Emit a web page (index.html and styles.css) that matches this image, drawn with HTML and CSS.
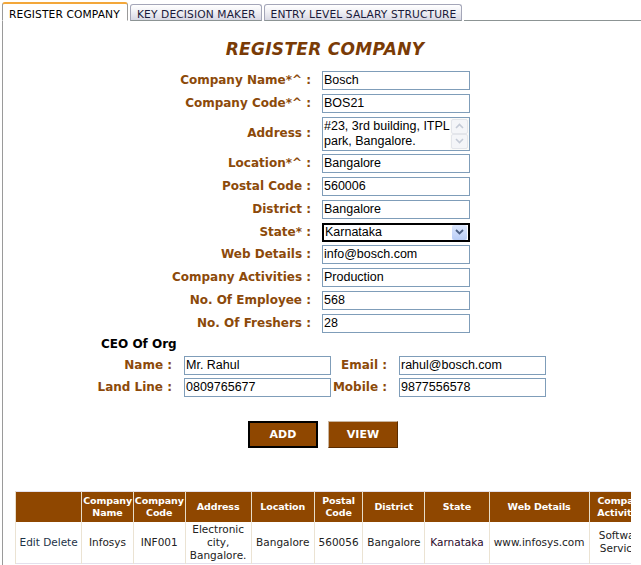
FILE: index.html
```html
<!DOCTYPE html>
<html>
<head>
<meta charset="utf-8">
<link rel="stylesheet" href="styles.css">
</head>
<body>
<div class="tabs">
  <div class="tab active">REGISTER COMPANY</div>
  <div class="tab">KEY DECISION MAKER</div>
  <div class="tab">ENTRY LEVEL SALARY STRUCTURE</div>
  <div class="tabline"></div>
</div>
<div class="panel">
  <h1 class="title">REGISTER COMPANY</h1>
  <div class="form">
    <label>Company Name*^ :</label><div class="inp">Bosch</div>
    <label>Company Code*^ :</label><div class="inp">BOS21</div>
    <label class="addr-label">Address :</label>
    <div class="inp area">
      <div class="area-text">#23, 3rd building, ITPL park, Bangalore.</div>
      <div class="vscroll">
        <div class="sbtn"><svg width="9" height="6" viewBox="0 0 9 6"><path d="M1 5 L4.5 1.5 L8 5" fill="none" stroke="#c4cad6" stroke-width="1.6"/></svg></div>
        <div class="sbtn"><svg width="9" height="6" viewBox="0 0 9 6"><path d="M1 1 L4.5 4.5 L8 1" fill="none" stroke="#c4cad6" stroke-width="1.6"/></svg></div>
      </div>
    </div>
    <label>Location*^ :</label><div class="inp">Bangalore</div>
    <label>Postal Code :</label><div class="inp">560006</div>
    <label>District :</label><div class="inp">Bangalore</div>
    <label>State* :</label>
    <div class="inp select"><span>Karnataka</span><div class="dd"><svg width="9" height="6" viewBox="0 0 9 6"><path d="M1 1 L4.5 4.5 L8 1" fill="none" stroke="#4d6185" stroke-width="1.8"/></svg></div></div>
    <label>Web Details :</label><div class="inp">info@bosch.com</div>
    <label>Company Activities :</label><div class="inp">Production</div>
    <label>No. Of Employee :</label><div class="inp">568</div>
    <label>No. Of Freshers :</label><div class="inp">28</div>
  </div>
  <div class="ceo-title">CEO Of Org</div>
  <div class="ceo">
    <label>Name :</label><div class="inp">Mr. Rahul</div>
    <label>Email :</label><div class="inp">rahul@bosch.com</div>
    <label>Land Line :</label><div class="inp">0809765677</div>
    <label>Mobile :</label><div class="inp">9877556578</div>
  </div>
  <div class="buttons">
    <div class="btn focus">ADD</div>
    <div class="btn">VIEW</div>
  </div>
  <div class="tablewrap">
    <table class="grid">
      <thead>
        <tr>
          <th class="c0"></th>
          <th class="c1">Company Name</th>
          <th class="c2">Company Code</th>
          <th class="c3">Address</th>
          <th class="c4">Location</th>
          <th class="c5">Postal Code</th>
          <th class="c6">District</th>
          <th class="c7">State</th>
          <th class="c8">Web Details</th>
          <th class="c9">Company Activities</th>
        </tr>
      </thead>
      <tbody>
        <tr>
          <td class="act">Edit Delete</td>
          <td>Infosys</td>
          <td>INF001</td>
          <td>Electronic city, Bangalore.</td>
          <td>Bangalore</td>
          <td>560056</td>
          <td>Bangalore</td>
          <td class="state">Karnataka</td>
          <td>www.infosys.com</td>
          <td>Software Services</td>
        </tr>
      </tbody>
    </table>
  </div>
</div>
</body>
</html>
```
FILE: styles.css
```css
html, body {
  margin: 0;
  padding: 0;
  background: #ffffff;
  overflow: hidden;
}
body {
  width: 641px;
  height: 565px;
  font-family: "DejaVu Sans", Verdana, sans-serif;
}
.tabs {
  display: flex;
  align-items: flex-end;
  height: 21px;
  padding-left: 2px;
}
.tab {
  height: 17px;
  box-sizing: border-box;
  margin-right: 2px;
  padding: 3px 5px 0 6px;
  font-size: 10.7px;
  letter-spacing: 0.1px;
  color: #1a1a3a;
  border: 1px solid #a4a6b8;
  border-bottom: 1px solid #8c9494;
  border-radius: 3px 3px 0 0;
  background: linear-gradient(#ffffff, #f2f2f6 40%, #d8d8e4);
  white-space: nowrap;
}
.tab.active {
  height: 19px;
  padding-top: 4px;
  color: #000;
  background: #fff;
  border-color: #9a9a9a;
  border-top: 2px solid #f3a73a;
  border-bottom: 1px solid #fff;
  width: 126px;
}
.tabline {
  flex: 1;
  border-bottom: 1px solid #8c9494;
  height: 0;
}
.panel {
  margin-left: 2px;
  border-left: 1px solid #9a9a9a;
  height: 544px;
  width: 640px;
  overflow: hidden;
}
.title {
  margin: 0;
  padding: 18px 0 0 4px;
  height: 32px;
  box-sizing: content-box;
  text-align: center;
  font-size: 17px;
  font-style: italic;
  font-weight: bold;
  color: #7a3b06;
  letter-spacing: 0.3px;
  line-height: 20px;
}
.form {
  display: grid;
  grid-template-columns: 140px 148px;
  column-gap: 11px;
  row-gap: 3.75px;
  margin-left: 168px;
}
label {
  text-align: right;
  font-size: 12px;
  font-weight: bold;
  color: #8c4a0a;
  line-height: 19px;
  white-space: nowrap;
}
.inp {
  height: 19px;
  box-sizing: border-box;
  border: 1px solid #7f9db9;
  font-family: "Liberation Sans", Arial, sans-serif;
  font-size: 12.5px;
  line-height: 17px;
  padding-left: 1px;
  color: #000;
  background: #fff;
  white-space: nowrap;
  overflow: hidden;
}
.addr-label {
  align-self: center;
}
.area {
  height: 34px;
  display: flex;
  padding: 0;
  white-space: normal;
  line-height: 15px;
}
.area-text {
  flex: 1;
  padding: 1px 0 0 1px;
}
.vscroll {
  width: 17px;
  display: flex;
  flex-direction: column;
  justify-content: space-between;
  padding: 1px;
  background: #fbfbf9;
}
.sbtn {
  height: 15px;
  border: 1px solid #e3e5ea;
  border-radius: 2px;
  background: #f4f5f8;
  display: flex;
  align-items: center;
  justify-content: center;
}
.select {
  border: 2px solid #000;
  display: flex;
  align-items: center;
  justify-content: space-between;
  padding: 0 1px 0 1px;
}
.select span {
  line-height: 15px;
}
.dd {
  width: 15px;
  height: 15px;
  background: linear-gradient(#dde8fe, #b9cdf6);
  border-radius: 2px;
  display: flex;
  align-items: center;
  justify-content: center;
}
.ceo-title {
  margin: 4px 0 0 98px;
  font-size: 12px;
  font-weight: bold;
  color: #000;
  line-height: 15px;
}
.ceo {
  display: grid;
  grid-template-columns: 92px 147px 68px 147px;
  row-gap: 3px;
  margin-left: 89px;
  margin-top: 4px;
}
.ceo label {
  padding-right: 12px;
}
.buttons {
  display: flex;
  gap: 10px;
  margin: 24px 0 0 245px;
}
.btn {
  width: 70px;
  height: 27px;
  box-sizing: border-box;
  background: #8f4700;
  color: #fff;
  font-size: 11px;
  font-weight: bold;
  text-align: center;
  line-height: 25px;
  border: 1px solid #c9b59f;
  border-right-color: #5a2c00;
  border-bottom-color: #5a2c00;
}
.btn.focus {
  border: 2px solid #000;
  line-height: 23px;
}
.tablewrap {
  margin: 43px 0 0 12px;
  width: 616px;
  overflow: hidden;
}
.grid {
  border-collapse: collapse;
  border: 1px solid #e4e0ec;
  font-size: 10.5px;
  table-layout: fixed;
  width: 640px;
}
.grid th {
  background: #8f4700;
  color: #fff;
  font-size: 9.5px;
  letter-spacing: -0.1px;
  font-weight: bold;
  height: 30px;
  padding: 0 1px;
  line-height: 12px;
  border-left: 1px solid #e8dcc8;
  overflow: hidden;
}
.grid td {
  height: 41px;
  text-align: center;
  padding: 0 2px;
  color: #222;
  line-height: 13px;
  border-left: 1px solid #ebe3d3;
  white-space: normal;
}
.grid td.act {
  color: #1d3347;
  white-space: nowrap;
}
.grid td.state {
  color: #2a0a2a;
}
.c0 { width: 61px; }
.c1 { width: 47px; }
.c2 { width: 47px; }
.c3 { width: 61px; }
.c4 { width: 58px; }
.c5 { width: 44px; }
.c6 { width: 57px; }
.c7 { width: 59px; }
.c8 { width: 94px; }
.c9 { width: 60px; }
```
